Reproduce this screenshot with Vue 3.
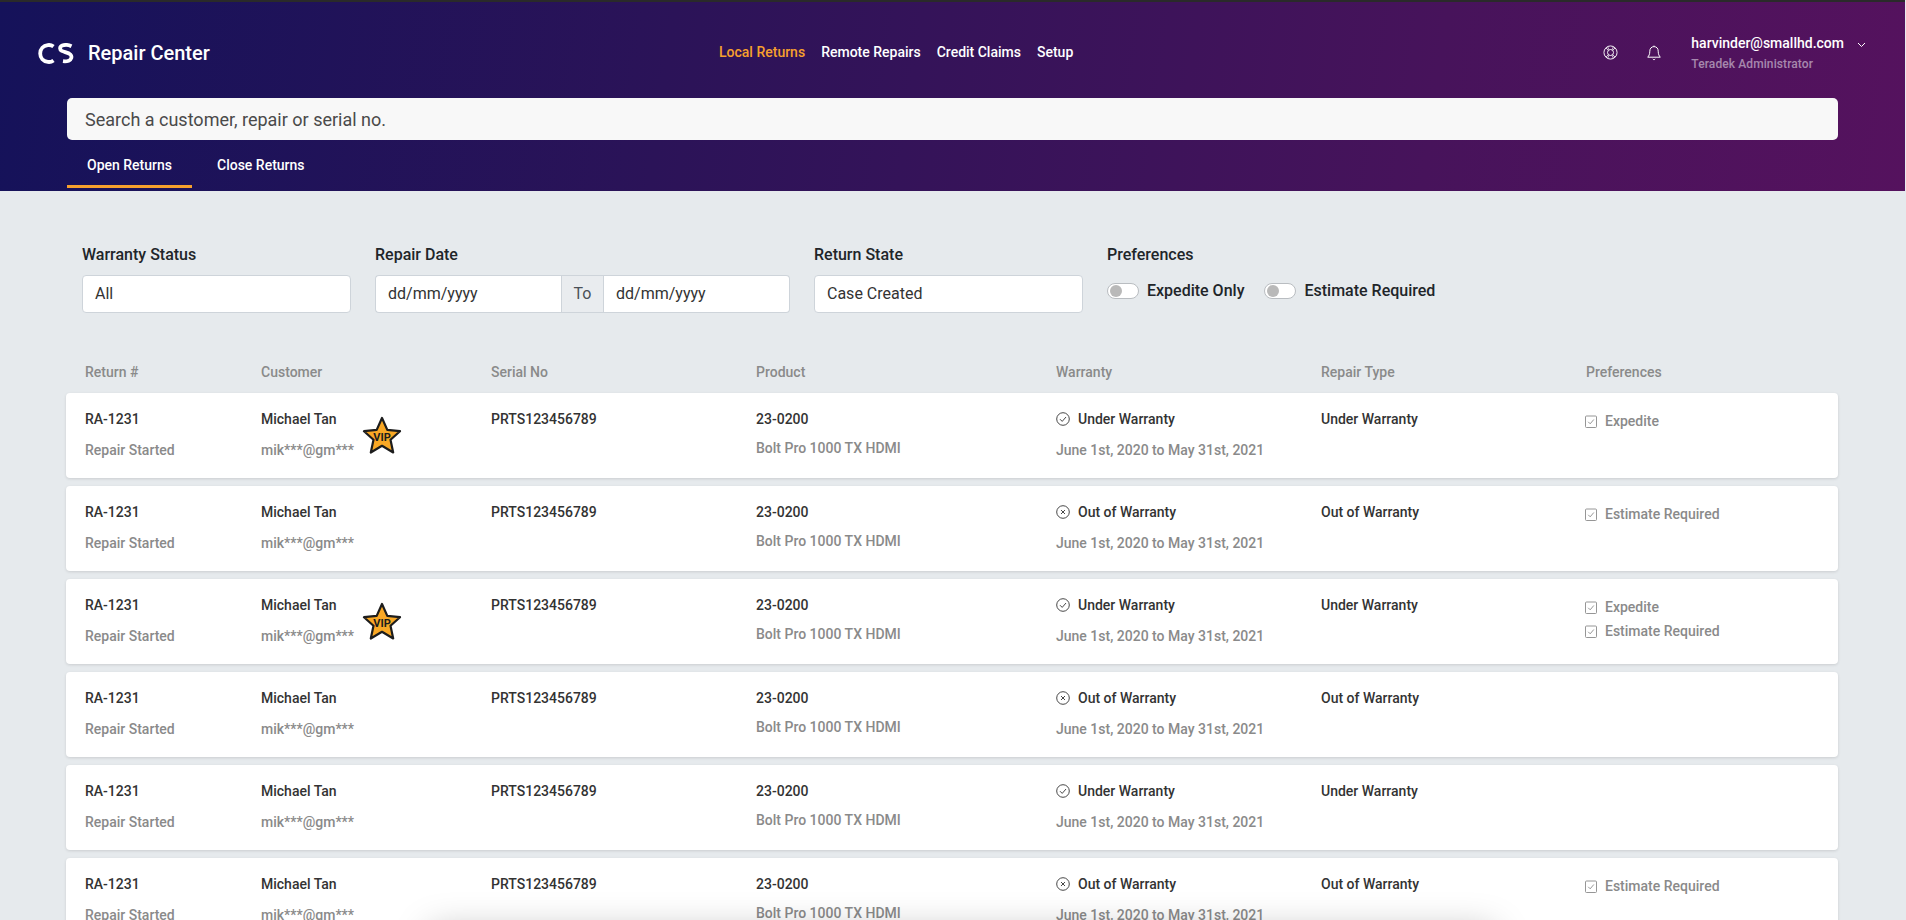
<script setup>
const nav = ['Remote Repairs', 'Credit Claims', 'Setup']
const cols = ['Return #', 'Customer', 'Serial No', 'Product', 'Warranty', 'Repair Type', 'Preferences']
const rows = [
  { vip: true, under: true, prefs: ['Expedite'] },
  { vip: false, under: false, prefs: ['Estimate Required'] },
  { vip: true, under: true, prefs: ['Expedite', 'Estimate Required'] },
  { vip: false, under: false, prefs: [] },
  { vip: false, under: true, prefs: [] },
  { vip: false, under: false, prefs: ['Estimate Required'] },
]
</script>

<template>
  <div class="page">
    <header class="header">
      <div class="topbar">
        <div class="brand">
          <svg class="logo" width="36" height="21" viewBox="0 0 36 21" fill="none" stroke="#fff" stroke-width="3.8">
            <path d="M15.500 3.600C13.800 2.300 11.800 1.800 9.800 2.100 5.300 2.700 2.200 6 2.200 10.500s3.100 7.800 7.600 8.400c2 .3 4-.2 5.700-1.500" />
            <path d="M33.500 3.200C31 2 26.800 1.600 24.200 2.600c-2.600 1-2.800 4-.4 5.300 2.600 1.300 6.600 1.600 8.600 3.600 2 2.100.9 5.200-1.700 6.200-1.600.6-3.600.8-5.700.5" />
          </svg>
          <span class="brand-name">Repair Center</span>
        </div>
        <nav class="nav">
          <a class="nav-link active">Local Returns</a>
          <a v-for="item in nav" :key="item" class="nav-link">{{ item }}</a>
        </nav>
        <div class="actions">
          <svg class="icon-help" width="15" height="15" viewBox="0 0 16 16" fill="none" stroke="#fff" stroke-width="1">
            <circle cx="8" cy="8" r="7" />
            <circle cx="8" cy="8" r="3.200" />
            <path d="M3.100 3.100l2.600 2.600M12.900 3.100l-2.600 2.600M3.100 12.900l2.600-2.600M12.900 12.900l-2.600-2.600M5 2l1.200 3M11 2L9.800 5M5 14l1.200-3M11 14l-1.200-3" stroke-width=".8" />
          </svg>
          <svg class="icon-bell" width="14" height="16" viewBox="0 0 14 16" fill="none" stroke="#fff" stroke-width="1">
            <path d="M7 1.600c-2.600 0-4.200 2-4.200 4.600 0 3.200-.9 4.600-2.100 6h12.600c-1.200-1.400-2.100-2.800-2.100-6C11.300 3.600 9.600 1.600 7 1.600z" />
            <path d="M7 .6v1M5.800 14c.3.8 2.100.8 2.400 0" />
          </svg>
          <div class="user">
            <div class="user-mail">harvinder@smallhd.com</div>
            <div class="user-role">Teradek Administrator</div>
          </div>
          <svg class="chevron" width="9" height="6" viewBox="0 0 9 6" fill="none" stroke="#fff" stroke-width="1">
            <path d="M1 1l3.500 3.500L8 1" />
          </svg>
        </div>
      </div>
      <div class="search">Search a customer, repair or serial no.</div>
      <div class="tabs">
        <a class="tab active">Open Returns</a>
        <a class="tab">Close Returns</a>
      </div>
    </header>

    <main class="main">
      <section class="filters">
        <div class="filter f-status">
          <div class="filter-label">Warranty Status</div>
          <div class="field">All</div>
        </div>
        <div class="filter f-date">
          <div class="filter-label">Repair Date</div>
          <div class="date-group">
            <div class="field date-from">dd/mm/yyyy</div>
            <div class="date-to">To</div>
            <div class="field date-until">dd/mm/yyyy</div>
          </div>
        </div>
        <div class="filter f-state">
          <div class="filter-label">Return State</div>
          <div class="field">Case Created</div>
        </div>
        <div class="filter">
          <div class="filter-label">Preferences</div>
          <div class="toggles">
            <label class="toggle-item"><span class="toggle"></span>Expedite Only</label>
            <label class="toggle-item"><span class="toggle"></span>Estimate Required</label>
          </div>
        </div>
      </section>

      <div class="table-head grid">
        <div v-for="c in cols" :key="c">{{ c }}</div>
      </div>

      <div v-for="(row, i) in rows" :key="i" class="card grid">
        <div class="cell">
          <div class="strong">RA-1231</div>
          <div class="muted">Repair Started</div>
        </div>
        <div class="cell customer">
          <div class="strong">Michael Tan</div>
          <div class="muted">mik***@gm***</div>
          <svg v-if="row.vip" class="vip" width="40" height="38" viewBox="0 0 40 38">
            <path d="M20 2l5.300 11.900 12.700 1.300-9.500 8.600 2.700 12.700L20 29.800 8.800 36.500l2.700-12.700L2 15.200l12.700-1.300z" fill="#f9a825" stroke="#1d1d1d" stroke-width="2.200" stroke-linejoin="round" />
            <text x="20" y="24.500" text-anchor="middle" class="vip-text">VIP</text>
          </svg>
        </div>
        <div class="cell">
          <div class="strong">PRTS123456789</div>
        </div>
        <div class="cell">
          <div class="strong">23-0200</div>
          <div class="muted product">Bolt Pro 1000 TX HDMI</div>
        </div>
        <div class="cell">
          <div class="strong status">
            <svg width="14" height="14" viewBox="0 0 14 14" fill="none" stroke="#333" stroke-width=".9">
              <circle cx="7" cy="7" r="6.300" />
              <path v-if="row.under" d="M4 7.200l2.200 2.200L10 5" />
              <path v-else d="M5 5l4 4M9 5l-4 4" />
            </svg>
            {{ row.under ? 'Under Warranty' : 'Out of Warranty' }}
          </div>
          <div class="muted">June 1st, 2020 to May 31st, 2021</div>
        </div>
        <div class="cell">
          <div class="strong">{{ row.under ? 'Under Warranty' : 'Out of Warranty' }}</div>
        </div>
        <div class="cell prefs">
          <div v-for="p in row.prefs" :key="p" class="pref">
            <svg width="12" height="13" viewBox="0 0 12 13" fill="none" stroke="#8a8a8a" stroke-width=".9">
              <rect x=".5" y="1" width="11" height="11.500" rx="1" />
              <path d="M3.200 6.800l2 2 3.600-4.300" />
            </svg>
            {{ p }}
          </div>
        </div>
      </div>
    </main>
    <div class="sheet"></div>
  </div>
</template>

<style>
html, body {
  margin: 0;
  height: 100%;
  overflow: hidden;
}
</style>

<style scoped>
.page {
  height: 920px;
  overflow: hidden;
  position: relative;
  background: #e6eaed;
  font-family: Roboto, "Liberation Sans", sans-serif;
  font-size: 14px;
  color: #333;
}
.header {
  height: 191px;
  box-sizing: border-box;
  margin-right: 1px;
  border-top: 2px solid #2a2a2a;
  background: linear-gradient(98deg, #15125a 0%, #2b1358 35%, #47135b 75%, #55125e 100%);
  color: #fff;
}
.topbar {
  height: 96px;
  display: flex;
  align-items: center;
  position: relative;
}
.brand {
  display: flex;
  align-items: center;
  margin-left: 38px;
  margin-top: 6px;
}
.logo {
  display: block;
  filter: blur(0.4px);
}
.brand-name {
  margin-left: 14px;
  font-size: 20px;
  font-weight: 500;
}
.nav {
  position: absolute;
  left: 719px;
  top: 41px;
  display: flex;
  gap: 16px;
  font-weight: 500;
  line-height: 18px;
}
.nav-link { color: #fff; }
.nav-link.active { color: #f6a02d; }
.actions {
  margin-left: auto;
  margin-top: 5px;
  display: flex;
  align-items: center;
}
.icon-help { margin-right: 29px; }
.icon-bell { margin-right: 30px; }
.user { margin-right: 13px; }
.user-mail {
  font-weight: 500;
  line-height: 20px;
}
.user-role {
  margin-top: 3px;
  font-size: 12px;
  font-weight: 500;
  letter-spacing: 0.1px;
  line-height: 16px;
  color: rgba(255, 255, 255, 0.5);
}
.chevron { margin: -15px 39px 0 0; }
.search {
  margin: 0 67px 0 67px;
  height: 42px;
  line-height: 43px;
  padding-left: 18px;
  border-radius: 5px;
  background: #f8f8f8;
  color: #4a4a4a;
  font-size: 18px;
}
.tabs {
  margin-left: 67px;
  display: flex;
  gap: 5px;
}
.tab {
  height: 48px;
  box-sizing: border-box;
  padding: 16px 20px 0;
  line-height: 18px;
  font-weight: 500;
  color: #fff;
}
.tab.active { border-bottom: 3px solid #f6a02d; }
.main { padding-top: 52px; }
.filters {
  display: flex;
  margin-left: 82px;
  gap: 24px;
}
.filter-label {
  height: 31px;
  padding-top: 1px;
  font-size: 16px;
  font-weight: 500;
  line-height: 22px;
  color: #212529;
}
.f-status, .f-state { width: 269px; }
.f-date { width: 415px; }
.field {
  height: 38px;
  box-sizing: border-box;
  padding: 0 12px;
  line-height: 36px;
  border: 1px solid #ced4da;
  border-radius: 4px;
  background: #fff;
  font-size: 16px;
  color: #333;
}
.date-group { display: flex; }
.date-from {
  flex: 1;
  border-radius: 4px 0 0 4px;
  border-right: 0;
}
.date-until {
  flex: 1;
  border-radius: 0 4px 4px 0;
  border-left: 0;
}
.date-to {
  width: 43px;
  height: 38px;
  box-sizing: border-box;
  border: 1px solid #ced4da;
  background: #e9ecef;
  text-align: center;
  line-height: 36px;
  font-size: 16px;
  color: #495057;
}
.toggles {
  display: flex;
  gap: 20px;
  padding-top: 5px;
}
.toggle-item {
  display: flex;
  align-items: center;
  gap: 8px;
  font-size: 16px;
  font-weight: 500;
  line-height: 22px;
  color: #212529;
}
.toggle {
  width: 32px;
  height: 16px;
  box-sizing: border-box;
  position: relative;
  border: 1px solid #b9bdc1;
  border-radius: 8px;
  background: #fff;
}
.toggle::after {
  content: "";
  position: absolute;
  left: 2px;
  top: 1px;
  width: 12px;
  height: 12px;
  border-radius: 50%;
  background: #b9b9b9;
}
.grid {
  display: grid;
  grid-template-columns: 176px 230px 265px 300px 265px 265px 1fr;
  margin: 0 68px 0 66px;
  padding-left: 19px;
}
.table-head {
  margin-top: 50px;
  height: 30px;
  line-height: 18px;
  font-weight: 500;
  color: #8a8a8a;
}
.card {
  height: 85px;
  margin-bottom: 8px;
  border-radius: 4px;
  background: #fff;
  box-shadow: 0 1px 3px rgba(0, 0, 0, 0.12);
}
.cell {
  padding-top: 15px;
  position: relative;
}
.strong {
  line-height: 22px;
  font-weight: 500;
  color: #333;
}
.muted {
  margin-top: 9px;
  line-height: 22px;
  font-weight: 500;
  color: #8a8a8a;
}
.muted.product { margin-top: 7px; }
.status {
  display: flex;
  align-items: center;
  gap: 8px;
}
.vip {
  position: absolute;
  left: 101px;
  top: 23px;
}
.vip-text {
  font-family: Roboto, sans-serif;
  font-size: 11px;
  font-weight: 700;
  fill: #1d1d1d;
}
.prefs { padding-top: 16px; }
.pref {
  display: flex;
  align-items: center;
  gap: 8px;
  height: 24px;
  font-weight: 500;
  color: #8a8a8a;
}
.pref svg { margin-left: -1px; }
.sheet {
  position: absolute;
  left: 430px;
  right: 412px;
  top: 930px;
  height: 60px;
  background: #fff;
  box-shadow: 0 0 36px rgba(0, 0, 0, 0.26);
}
</style>
